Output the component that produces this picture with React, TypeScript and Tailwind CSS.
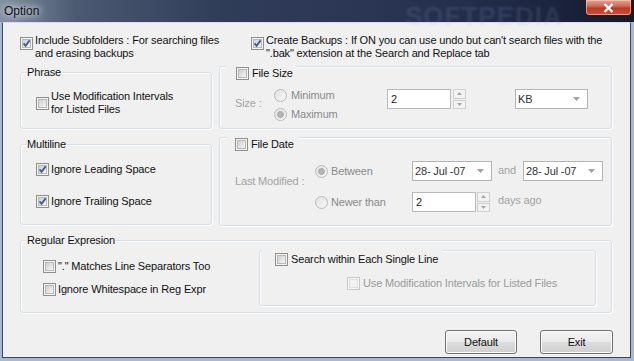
import type { ReactNode } from 'react'

// Win7-style check box, 13px square
function Check({ checked = false, disabled = false }: { checked?: boolean; disabled?: boolean }) {
  return (
    <span
      className={`flex h-[13px] w-[13px] shrink-0 border p-px ${
        disabled ? 'border-[#c8c8c8] bg-[#f6f6f6]' : 'border-[#8e8f8f] bg-[#f4f4f4]'
      }`}
    >
      <span
        className={`relative flex-1 border ${
          disabled
            ? 'border-[#e0e0e0] bg-[#f2f2f2]'
            : 'border-[#b8b8b8] bg-[linear-gradient(135deg,#cfcfcf_0%,#e6e6e6_60%,#f6f6f6_100%)]'
        }`}
      >
        {checked && (
          <svg className="absolute -left-px -top-px" width="9" height="9" viewBox="0 0 9 9">
            <path d="M1.6 4.4 L3.6 6.8 L7.6 1.4" stroke="#3f5a8c" strokeWidth="1.8" fill="none" />
          </svg>
        )}
      </span>
    </span>
  )
}

function Radio({ selected = false }: { selected?: boolean }) {
  return (
    <span className="flex h-[13px] w-[13px] shrink-0 items-center justify-center rounded-full border border-[#b9b9b9] bg-[linear-gradient(135deg,#e2e2e2,#f7f7f7)]">
      {selected && <span className="h-[7px] w-[7px] rounded-full border border-[#a8a8a8] bg-[#b4b4b4]" />}
    </span>
  )
}

function Group({ label, className, children }: { label: string; className: string; children: ReactNode }) {
  return (
    <div
      className={`relative rounded-[3px] border border-[#d5dfe5] shadow-[inset_1px_1px_0_#fff,1px_1px_0_#fff] ${className}`}
    >
      <span className="absolute -top-[7px] left-[5px] bg-[#f0f0f0] px-px leading-[13px] text-[#111]">{label}</span>
      {children}
    </div>
  )
}

function CheckGroup({
  label,
  className,
  headerClass,
  children,
}: {
  label: string
  className: string
  headerClass: string
  children: ReactNode
}) {
  return (
    <div
      className={`relative rounded-[3px] border border-[#d5dfe5] shadow-[inset_1px_1px_0_#fff,1px_1px_0_#fff] ${className}`}
    >
      <span className={`absolute flex items-center gap-[3px] bg-[#f0f0f0] pr-[4px] leading-[13px] text-[#111] ${headerClass}`}>
        <Check />
        {label}
      </span>
      {children}
    </div>
  )
}

function Spinner() {
  return (
    <div className="flex h-[20px] w-[13px] flex-col gap-px">
      {['up', 'down'].map((d) => (
        <div key={d} className="flex flex-1 items-center justify-center border border-[#cfcfcf] bg-[#f3f3f3]">
          <svg width="5" height="3" viewBox="0 0 5 3">
            <path d={d === 'up' ? 'M0 3 L2.5 0 L5 3Z' : 'M0 0 L2.5 3 L5 0Z'} fill="#a6a6a6" />
          </svg>
        </div>
      ))}
    </div>
  )
}

function TextBox({ value, className }: { value: string; className: string }) {
  return (
    <div className={`flex h-[20px] items-center border border-[#b9b9b9] bg-white pl-[3px] leading-[13px] text-[#222] ${className}`}>
      {value}
    </div>
  )
}

function Combo({ value, className }: { value: string; className: string }) {
  return (
    <div
      className={`flex h-[20px] items-center justify-between border border-[#b4b4b4] bg-white pl-[2px] pr-[7px] leading-[13px] text-[#333] ${className}`}
    >
      {value}
      <svg width="7" height="4" viewBox="0 0 7 4">
        <path d="M0 0 L3.5 4 L7 0Z" fill="#a3a3a3" />
      </svg>
    </div>
  )
}

function Button({ label, className }: { label: string; className: string }) {
  return (
    <button
      className={`h-[24px] rounded-[3px] border border-[#707070] bg-[linear-gradient(180deg,#f2f2f2_0%,#ebebeb_48%,#dddddd_52%,#cfcfcf_100%)] shadow-[inset_0_0_0_1px_#fcfcfc] leading-[13px] text-[#111] ${className}`}
    >
      {label}
    </button>
  )
}

export default function App() {
  return (
    <div className="relative flex h-[361px] w-[634px] flex-col bg-[#a7bad2] font-['Liberation_Sans',Arial,sans-serif] text-[11px] tracking-[-0.15px]">
      {/* title bar */}
      <div className="relative flex h-[22px] items-start bg-[linear-gradient(90deg,#8290a4_0%,#4b5972_12%,#303d59_35%,#2a3554_60%,#1f2a47_80%,#141a2c_100%)]">
        <span className="pointer-events-none absolute left-[405px] top-[-3px] font-bold text-[26px] tracking-[1px] text-[#8fa6cf] opacity-15 blur-[1px]">
          SOFTPEDIA
        </span>
        <span className="ml-[4px] mt-[4px] text-[12px] leading-[14px] tracking-normal text-[#111] [text-shadow:0_0_6px_#e8ecf2,0_0_10px_#d6dde8]">
          Option
        </span>
        <div className="ml-auto mr-[2px] flex h-[16px] w-[47px] items-center justify-center rounded-b-[4px] border border-t-0 border-[#3d1410] bg-[linear-gradient(180deg,#e3a498_0%,#d06a58_40%,#bb3a25_55%,#c9513a_100%)] shadow-[inset_0_0_0_1px_rgba(255,220,210,0.5)]">
          <svg width="11" height="10" viewBox="0 0 11 10">
            <path d="M1.5 1 L9.5 9 M9.5 1 L1.5 9" stroke="#fff" strokeWidth="2.4" />
          </svg>
        </div>
      </div>

      {/* client area */}
      <div className="mb-[3px] ml-[2px] mr-[3px] flex flex-1 flex-col border border-[#38465a] border-t-[#d9dee6] bg-[#f0f0f0] pl-[17px] pr-[17px] pt-[11px] text-[#111]">
        {/* top options */}
        <div className="flex h-[28px]">
          <div className="flex w-[231px] items-start gap-[2px]">
            <span className="mt-[3px]">
              <Check checked />
            </span>
            <span className="leading-[13px]">
              Include Subfolders : For searching files
              <br />
              and erasing backups
            </span>
          </div>
          <div className="flex items-start gap-[2px]">
            <span className="mt-[3px]">
              <Check checked />
            </span>
            <span className="leading-[13px]">
              Create Backups : If ON you can use undo but can't search files with the
              <br />
              ".bak" extension at the Search and Replace tab
            </span>
          </div>
        </div>

        {/* phrase / file size */}
        <div className="flex items-start gap-[7px]">
          <Group label="Phrase" className="mt-[10px] h-[57px] w-[192px] pl-[15px] pt-[17px]">
            <div className="flex items-center gap-[2px]">
              <Check />
              <span className="leading-[13px]">
                Use Modification Intervals
                <br />
                for Listed Files
              </span>
            </div>
          </Group>
          <CheckGroup
            label="File Size"
            headerClass="-top-[2px] left-[6px] pl-[10px] pt-[2px]"
            className="mt-[4px] h-[63px] w-[393px] pl-[15px] pt-[22px]"
          >
            <div className="flex items-start">
              <span className="mt-[8px] w-[39px] leading-[13px] text-[#a3a3a3]">Size :</span>
              <div className="flex w-[113px] flex-col gap-[6px] text-[#8a8a8a]">
                <div className="flex items-center gap-[4px] leading-[13px]">
                  <Radio />
                  Minimum
                </div>
                <div className="flex items-center gap-[4px] leading-[13px]">
                  <Radio selected />
                  Maximum
                </div>
              </div>
              <TextBox value="2" className="w-[64px]" />
              <div className="ml-[2px]">
                <Spinner />
              </div>
              <Combo value="KB" className="ml-[49px] w-[73px]" />
            </div>
          </CheckGroup>
        </div>

        {/* multiline / file date */}
        <div className="flex items-start gap-[7px]">
          <Group label="Multiline" className="mt-[15px] h-[81px] w-[192px] pl-[15px] pt-[18px]">
            <div className="flex flex-col gap-[19px]">
              <div className="flex items-center gap-[2px] leading-[13px]">
                <Check checked />
                Ignore Leading Space
              </div>
              <div className="flex items-center gap-[2px] leading-[13px]">
                <Check checked />
                Ignore Trailing Space
              </div>
            </div>
          </Group>
          <CheckGroup
            label="File Date"
            headerClass="-top-[2px] left-[6px] pl-[9px] pt-[2px]"
            className="mt-[8px] h-[89px] w-[393px] pl-[15px] pt-[23px]"
          >
            <div className="flex items-start">
              <span className="mt-[14px] w-[80px] leading-[13px] text-[#a3a3a3]">Last Modified :</span>
              <div className="flex flex-col gap-[11px]">
                <div className="flex h-[20px] items-center">
                  <div className="flex w-[97px] items-center gap-[3px] leading-[13px] text-[#8a8a8a]">
                    <Radio selected />
                    Between
                  </div>
                  <Combo value="28- Jul -07" className="w-[80px]" />
                  <span className="mb-[2px] ml-[6px] w-[25px] leading-[13px] text-[#a3a3a3]">and</span>
                  <Combo value="28- Jul -07" className="w-[80px]" />
                </div>
                <div className="flex h-[20px] items-center">
                  <div className="flex w-[97px] items-center gap-[3px] leading-[13px] text-[#8a8a8a]">
                    <Radio />
                    Newer than
                  </div>
                  <TextBox value="2" className="w-[64px]" />
                  <div className="ml-px">
                    <Spinner />
                  </div>
                  <span className="mb-[4px] ml-[8px] leading-[13px] text-[#a3a3a3]">days ago</span>
                </div>
              </div>
            </div>
          </CheckGroup>
        </div>

        {/* regular expression */}
        <Group label="Regular Expresion" className="mt-[14px] flex h-[73px] w-[592px] items-start">
          <div className="flex w-[238px] flex-col gap-[10px] pl-[22px] pt-[19px]">
            <div className="flex items-center gap-[2px] leading-[13px]">
              <Check />
              "." Matches Line Separators Too
            </div>
            <div className="flex items-center gap-[2px] leading-[13px]">
              <Check />
              Ignore Whitespace in Reg Expr
            </div>
          </div>
          <CheckGroup
            label="Search within Each Single Line"
            headerClass="-top-[2px] left-[2px] pl-[13px] pt-[4px]"
            className="mt-[9px] h-[56px] w-[337px] pl-[87px] pt-[26px]"
          >
            <div className="flex items-center gap-[3px] leading-[13px] text-[#9a9a9a]">
              <Check disabled />
              Use Modification Intervals for Listed Files
            </div>
          </CheckGroup>
        </Group>

        {/* buttons */}
        <div className="mt-[17px] flex justify-end gap-[23px]">
          <Button label="Default" className="w-[72px]" />
          <Button label="Exit" className="w-[73px]" />
        </div>
      </div>
    </div>
  )
}
